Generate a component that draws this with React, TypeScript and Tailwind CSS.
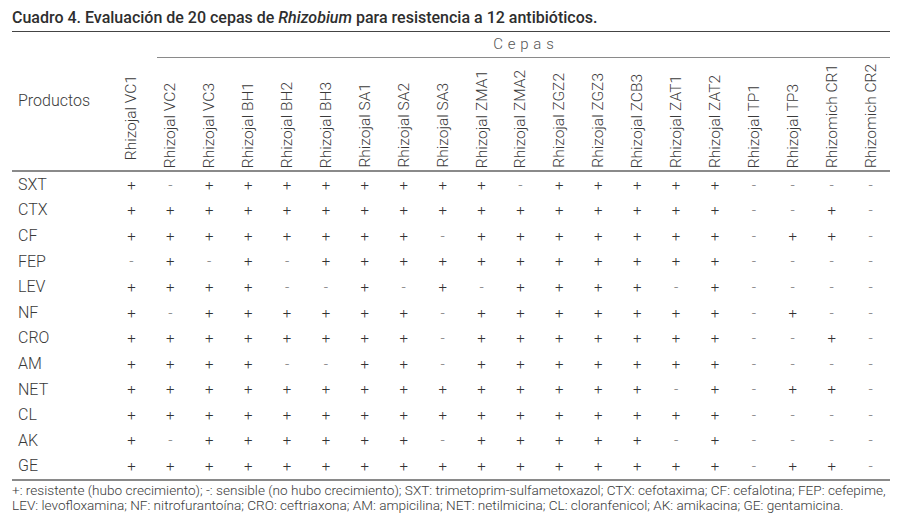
const strains = [
  "Rhizojal VC1",
  "Rhizojal VC2",
  "Rhizojal VC3",
  "Rhizojal BH1",
  "Rhizojal BH2",
  "Rhizojal BH3",
  "Rhizojal SA1",
  "Rhizojal SA2",
  "Rhizojal SA3",
  "Rhizojal ZMA1",
  "Rhizojal ZMA2",
  "Rhizojal ZGZ2",
  "Rhizojal ZGZ3",
  "Rhizojal ZCB3",
  "Rhizojal ZAT1",
  "Rhizojal ZAT2",
  "Rhizojal TP1",
  "Rhizojal TP3",
  "Rhizomich CR1",
  "Rhizomich CR2",
];

// one string per antibiotic, one char per strain
const rows: [string, string][] = [
  ["SXT", "+-++++++++-+++++----"],
  ["CTX", "++++++++++++++++--+-"],
  ["CF", "++++++++-+++++++-++-"],
  ["FEP", "-+-+-+++++++++++----"],
  ["LEV", "++++--+-+-++++-+----"],
  ["NF", "+-++++++-+++++++-+--"],
  ["CRO", "++++++++-+++++++--+-"],
  ["AM", "++++--++-+++++++----"],
  ["NET", "++++++++++++++-+-++-"],
  ["CL", "++++++++++++++++----"],
  ["AK", "+-++++++-+++++-+----"],
  ["GE", "++++++++++++++++-++-"],
];

export default function App() {
  return (
    <div className="w-[900px] h-[528px] bg-white text-[#3a3a3a] font-['Roboto',sans-serif]">
      <div className="ml-3 w-[878px]">
        <div className="pt-2 pb-[3px] border-b border-[#444] text-[16px] leading-5 font-medium text-[#2e2e2e]">
          Cuadro 4. Evaluación de 20 cepas de <i>Rhizobium</i> para resistencia a 12 antibióticos.
        </div>

        <div className="ml-[145px] h-[26px] border-b border-[#8a8a8a] flex items-center justify-center">
          <span className="text-[15px] font-light tracking-[0.32em] text-[#555] pl-[0.32em]">Cepas</span>
        </div>

        <div className="grid grid-cols-[100px_repeat(20,minmax(0,1fr))] h-[114px] border-b-2 border-[#8a8a8a] font-light">
          <div className="pl-1.5 pt-[33px] text-[16px] leading-5">Productos</div>
          {strains.map((s, i) => (
            <div key={s} className={`flex justify-center items-end ${i === 0 ? "pb-[10px]" : "pb-[2px]"}`}>
              <span className="[writing-mode:vertical-rl] rotate-180 text-[15.5px] leading-[18px] whitespace-nowrap">
                {s}
              </span>
            </div>
          ))}
        </div>

        <div className="border-b-2 border-[#8a8a8a] font-light">
          {rows.map(([name, vals]) => (
            <div key={name} className="grid grid-cols-[100px_repeat(20,minmax(0,1fr))] h-[25.6px] items-center">
              <div className="pl-1.5 text-[16px]">{name}</div>
              {vals.split("").map((v, i) => (
                <div key={i} className={`text-center text-[15px] ${v === "+" ? "text-[#333]" : "text-[#777]"}`}>
                  {v}
                </div>
              ))}
            </div>
          ))}
        </div>

        <p className="pt-[2px] text-[13.6px] leading-[15px] font-light text-[#3a3a3a] whitespace-nowrap">
          +: resistente (hubo crecimiento); -: sensible (no hubo crecimiento); SXT: trimetoprim-sulfametoxazol; CTX:
          cefotaxima; CF: cefalotina; FEP: cefepime,
          <br />
          LEV: levofloxamina; NF: nitrofurantoína; CRO: ceftriaxona; AM: ampicilina; NET: netilmicina; CL:
          cloranfenicol; AK: amikacina; GE: gentamicina.
        </p>
      </div>
    </div>
  );
}
